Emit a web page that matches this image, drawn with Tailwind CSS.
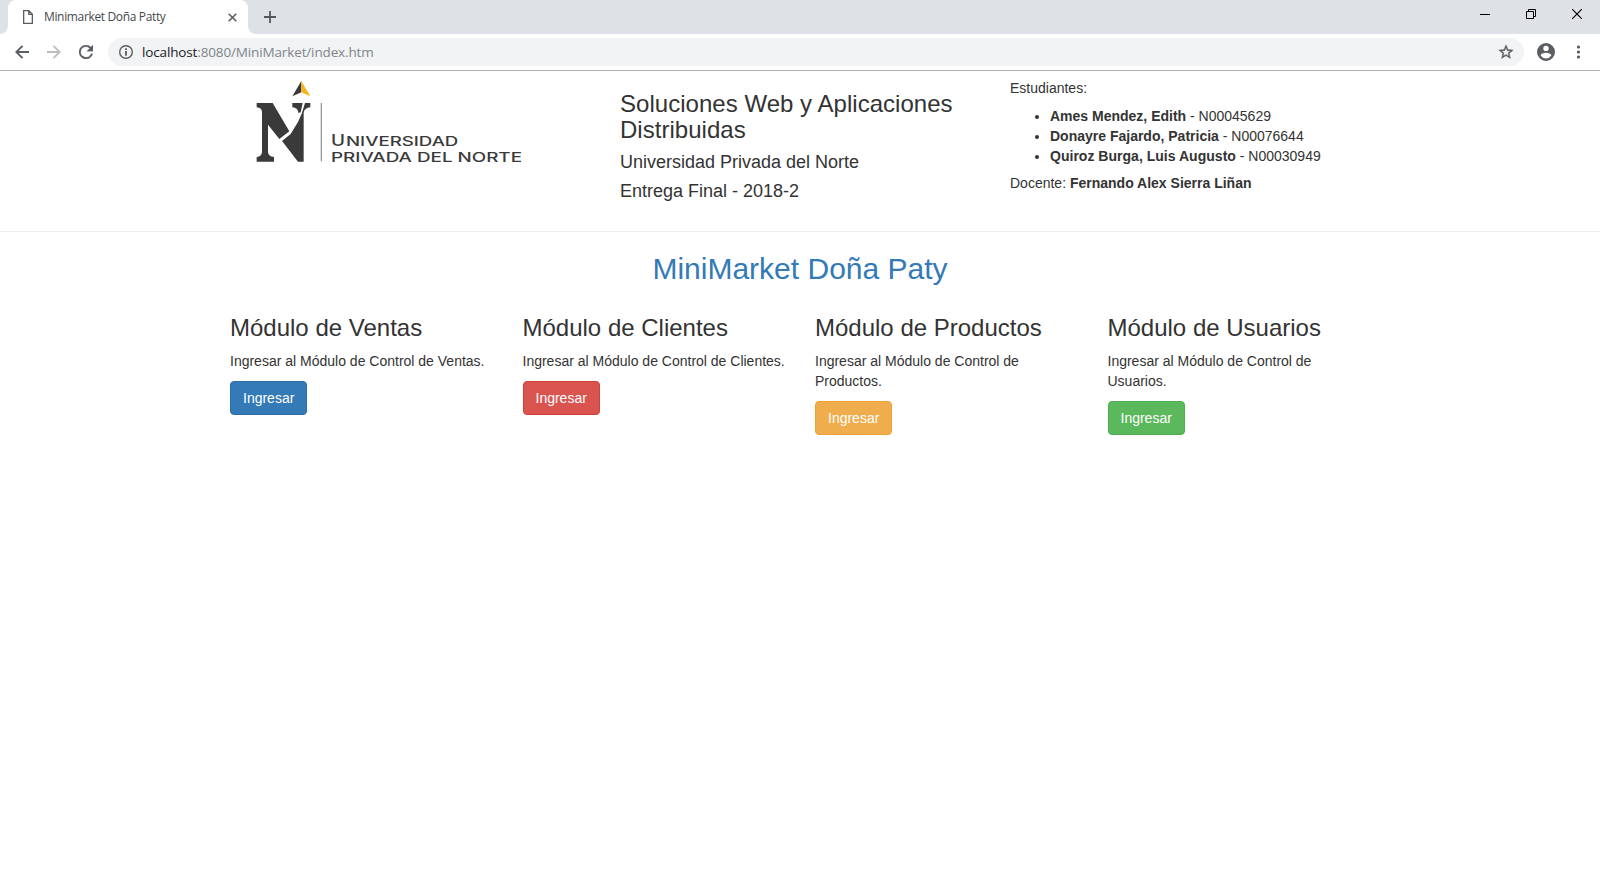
<!DOCTYPE html>
<html lang="es">
<head>
<meta charset="utf-8">
<title>Minimarket Doña Patty</title>
<script src="https://cdn.jsdelivr.net/npm/@tailwindcss/browser@4"></script>
</head>
<body class="h-[870px] overflow-hidden bg-white font-['Liberation_Sans',Arial,sans-serif] text-sm leading-5 text-[#333]">
<div class="flex h-[34px] items-end justify-between bg-[#dee1e6]">
  <div class="flex items-end">
    <svg class="block" width="8" height="8" viewBox="0 0 8 8"><path d="M8 0v8H0a8 8 0 0 0 8-8z" fill="#fff"/></svg>
    <div class="flex h-[34px] w-60 items-center rounded-t-lg bg-white pl-[15px] pr-[11px] font-['Open_Sans',sans-serif] text-xs text-[#45494d]">
      <svg width="10" height="14" viewBox="0 0 10 14" fill="none" stroke="#5a5d61" stroke-width="1.3"><path d="M.65.65h5.2l3.5 3.6v9.1H.65zM5.8.8v3.6h3.5"/></svg>
      <span class="ml-[11px] w-[121px] whitespace-nowrap tracking-[-0.35px]">Minimarket Doña Patty</span>
      <svg class="ml-auto" width="9" height="9" viewBox="0 0 9 9" stroke="#5a5d61" stroke-width="1.6"><path d="M.7.7l7.6 7.6M8.3.7L.7 8.3"/></svg>
    </div>
    <svg class="block" width="8" height="8" viewBox="0 0 8 8"><path d="M0 0v8h8a8 8 0 0 1-8-8z" fill="#fff"/></svg>
    <svg class="mb-[11px] ml-2" width="12" height="12" viewBox="0 0 12 12" stroke="#54585c" stroke-width="1.8"><path d="M6 0v12M0 6h12"/></svg>
  </div>
  <div class="flex h-7 items-center self-start pr-[18px]">
    <svg width="10" height="10" viewBox="0 0 10 10"><path d="M0 5.5h10" stroke="#000"/></svg>
    <svg class="ml-9" width="10" height="10" viewBox="0 0 10 10" fill="none" stroke="#000"><path d="M.5 2.5h7v7h-7zM2.5 2.5v-2h7v7h-2"/></svg>
    <svg class="ml-9" width="10" height="10" viewBox="0 0 10 10" stroke="#000" stroke-width="1.2"><path d="M0 0l10 10M10 0L0 10"/></svg>
  </div>
</div>
<div class="flex h-[37px] items-center border-b border-[#b0b0b1] bg-white pl-[15px] pr-[19px]">
  <svg width="14" height="14" viewBox="0 0 14 14" fill="none" stroke="#5a5e63" stroke-width="1.9"><path d="M14 7H1.500M7.500.8L1.300 7l6.200 6.200"/></svg>
  <svg class="ml-[18px]" width="14" height="14" viewBox="0 0 14 14" fill="none" stroke="#bbbdbf" stroke-width="1.9"><path d="M0 7h12.500M6.500.8L12.700 7l-6.200 6.200"/></svg>
  <svg class="ml-[18px]" width="14" height="14" viewBox="4 4 16 16" fill="#5a5e63" stroke="#5a5e63" stroke-width=".3"><path d="M17.650 6.350A7.958 7.958 0 0 0 12 4a8 8 0 1 0 7.730 10h-2.080A6 6 0 1 1 12 6c1.660 0 3.140.69 4.220 1.780L13 11h7V4z"/></svg>
  <div class="ml-[15px] flex h-7 flex-1 items-center rounded-full bg-[#f1f3f4] pl-[11px] pr-[10px] font-['Open_Sans',sans-serif] text-[13.5px]">
    <svg width="14" height="14" viewBox="0 0 14 14" fill="none" stroke="#5a5e63"><circle cx="7" cy="7" r="6.300" stroke-width="1.400"/><path d="M7 6v4.700M7 3.300v1.600" stroke-width="1.800"/></svg>
    <span class="ml-[9px] whitespace-nowrap tracking-[-0.14px] text-[#80868b]"><span class="text-[#202124]">localhost</span>:8080/MiniMarket/index.htm</span>
    <svg class="ml-auto" width="16" height="16" viewBox="1 1 22 22" fill="#5a5e63" stroke="#5a5e63" stroke-width=".5"><path d="M22 9.240l-7.190-.62L12 2 9.190 8.630 2 9.240l5.460 4.730L5.820 21 12 17.270 18.180 21l-1.630-7.030zM12 15.400l-3.760 2.270 1-4.280-3.320-2.880 4.380-.38L12 6.100l1.710 4.040 4.380.38-3.320 2.880 1 4.280z"/></svg>
  </div>
  <svg class="ml-[13px]" width="18" height="18" viewBox="2 2 20 20" fill="#5a5e63"><path d="M12 2a10 10 0 1 0 0 20 10 10 0 0 0 0-20zm0 3a3 3 0 1 1 0 6 3 3 0 0 1 0-6zm0 14.200a7.200 7.200 0 0 1-6-3.220c.03-1.990 4-3.080 6-3.080s5.970 1.090 6 3.080a7.200 7.200 0 0 1-6 3.220z"/></svg>
  <svg class="ml-[22px]" width="4" height="14" viewBox="0 0 4 14" fill="#5a5e63"><circle cx="1.500" cy="2" r="1.600"/><circle cx="1.500" cy="7" r="1.600"/><circle cx="1.500" cy="12" r="1.600"/></svg>
</div>

<header class="h-[161px] border-b border-[#eee]">
  <div class="mx-auto grid w-[1170px] grid-cols-3">
    <div class="px-[15px]">
      <svg class="block" width="360" height="110" viewBox="-30 3 1080 330" fill="#3a3a3a" role="img" aria-label="Universidad Privada del Norte">
        <path d="M184 33L157 79l27-12z"/><path d="M184 33l27 46-27-12z" fill="#f2b61c"/>
        <path d="M50 99h48l50 85-30 23-34-43v82q1 14 18 15v14H50v-14q15-1 16-15V126q-1-13-16-14z"/>
        <path d="M157 99h31l-6 28-7 2q0-15-18-17zM195 99h16v13q-18 2-20 16v147h-17l-48-62 26-21 22-36 11-25z"/>
        <path d="M242 99h4v175h-4z" fill="#999"/>
        <g font-family="Inter, sans-serif" font-weight="500">
          <text x="273" y="228" font-size="46" textLength="42" lengthAdjust="spacingAndGlyphs">U</text>
          <text x="318" y="228" font-size="39" textLength="337" lengthAdjust="spacingAndGlyphs">NIVERSIDAD</text>
          <text x="273" y="275" font-size="40" textLength="573" lengthAdjust="spacingAndGlyphs">PRIVADA DEL NORTE</text>
        </g>
      </svg>
    </div>
    <div class="px-[15px] pt-5">
      <h3 class="mb-[9px] text-2xl leading-[26.4px] tracking-[0.03px]">Soluciones Web y Aplicaciones Distribuidas</h3>
      <h4 class="mb-[9px] text-lg leading-[19.8px]">Universidad Privada del Norte</h4>
      <h4 class="text-lg leading-[19.8px]">Entrega Final - 2018-2</h4>
    </div>
    <div class="px-[15px] pt-[7px]">
      <p>Estudiantes:</p>
      <ul class="mt-2 mb-[7px] list-disc pl-10">
        <li><b>Ames Mendez, Edith</b> - N00045629</li>
        <li><b>Donayre Fajardo, Patricia</b> - N00076644</li>
        <li><b class="tracking-[0.02px]">Quiroz Burga, Luis Augusto</b> - N00030949</li>
      </ul>
      <p>Docente: <b>Fernando Alex Sierra Liñan</b></p>
    </div>
  </div>
</header>

<main>
  <h2 class="mt-5 mb-[10px] text-center text-[30px] leading-[33px] text-[#337ab7]">MiniMarket Doña Paty</h2>
  <div class="mx-auto grid w-[1170px] grid-cols-4 pt-5">
    <section class="px-[15px]">
      <h3 class="mb-[10px] text-2xl leading-[26.4px]">Módulo de Ventas</h3>
      <p class="mb-[10px]">Ingresar al Módulo de Control de Ventas.</p>
      <button class="h-[34px] rounded border border-[#2e6da4] bg-[#337ab7] px-3 text-white">Ingresar</button>
    </section>
    <section class="px-[15px]">
      <h3 class="mb-[10px] text-2xl leading-[26.4px]">Módulo de Clientes</h3>
      <p class="mb-[10px]">Ingresar al Módulo de Control de Clientes.</p>
      <button class="h-[34px] rounded border border-[#d43f3a] bg-[#d9534f] px-3 text-white">Ingresar</button>
    </section>
    <section class="px-[15px]">
      <h3 class="mb-[10px] text-2xl leading-[26.4px]">Módulo de Productos</h3>
      <p class="mb-[10px]">Ingresar al Módulo de Control de Productos.</p>
      <button class="h-[34px] rounded border border-[#eea236] bg-[#f0ad4e] px-3 text-white">Ingresar</button>
    </section>
    <section class="px-[15px]">
      <h3 class="mb-[10px] text-2xl leading-[26.4px]">Módulo de Usuarios</h3>
      <p class="mb-[10px]">Ingresar al Módulo de Control de Usuarios.</p>
      <button class="h-[34px] rounded border border-[#4cae4c] bg-[#5cb85c] px-3 text-white">Ingresar</button>
    </section>
  </div>
</main>
</body>
</html>
